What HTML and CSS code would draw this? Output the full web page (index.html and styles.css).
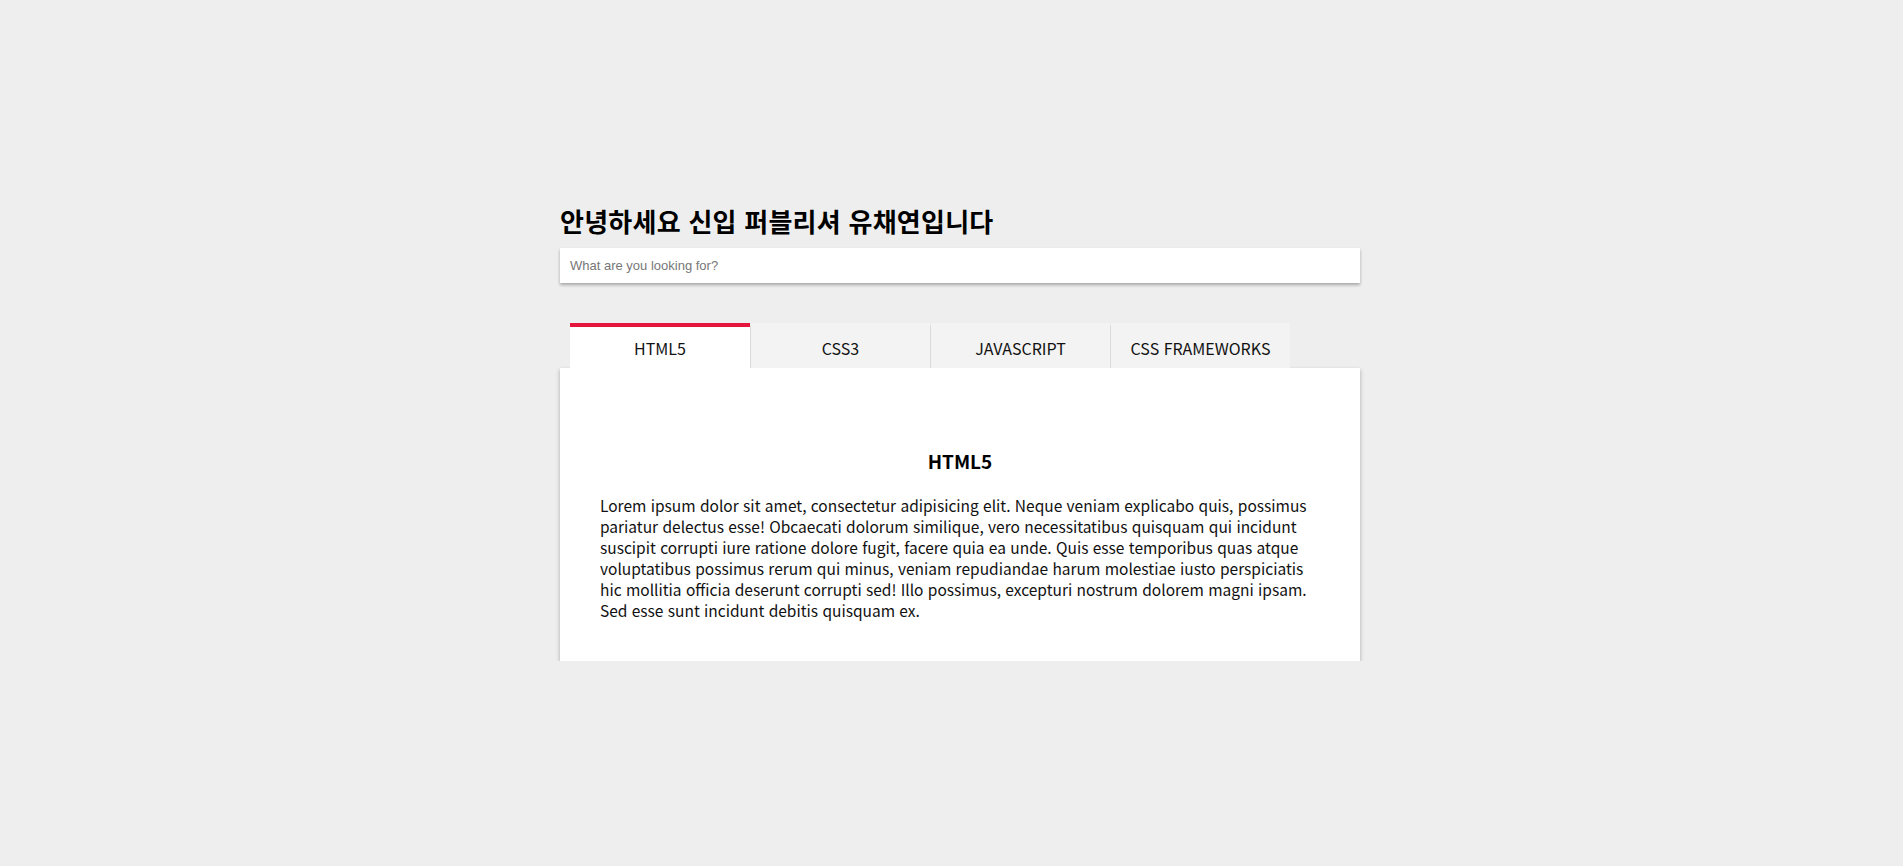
FILE: index.html
```html
<!DOCTYPE html>
<html lang="ko">
<head>
<meta charset="utf-8">
<title>Tabs</title>
<link rel="stylesheet" href="styles.css">
</head>
<body>
<div class="page">
  <h1 class="title">안녕하세요 신입 퍼블리셔 유채연입니다</h1>
  <div class="search">
    <input class="search-input" type="text" placeholder="What are you looking for?">
  </div>
  <div class="tabs">
    <div class="tab active">HTML5</div>
    <div class="tab">CSS3</div>
    <div class="tab">JAVASCRIPT</div>
    <div class="tab">CSS FRAMEWORKS</div>
  </div>
  <div class="panel">
    <h2 class="panel-title">HTML5</h2>
    <p class="panel-text">Lorem ipsum dolor sit amet, consectetur adipisicing elit. Neque veniam explicabo quis, possimus pariatur delectus esse! Obcaecati dolorum similique, vero necessitatibus quisquam qui incidunt suscipit corrupti iure ratione dolore fugit, facere quia ea unde. Quis esse temporibus quas atque voluptatibus possimus rerum qui minus, veniam repudiandae harum molestiae iusto perspiciatis hic mollitia officia deserunt corrupti sed! Illo possimus, excepturi nostrum dolorem magni ipsam. Sed esse sunt incidunt debitis quisquam ex.</p>
  </div>
</div>
</body>
</html>
```
FILE: styles.css
```css
html, body {
  margin: 0;
  padding: 0;
  background: #eeeeee;
  font-family: "Noto Sans CJK KR", "Noto Sans", sans-serif;
  color: #111;
}
.page {
  width: 800px;
  margin: 0 auto;
  padding: 204px 0 0 17px;
}
.title {
  margin: 0;
  font-size: 26px;
  line-height: 34px;
  font-weight: 700;
  letter-spacing: 0.25px;
  color: #000;
}
.search {
  margin-top: 10px;
  background: #fff;
  box-shadow: 0 2px 3px rgba(0, 0, 0, 0.3);
  height: 35px;
  display: flex;
  align-items: center;
}
.search-input {
  border: 0;
  outline: 0;
  background: transparent;
  width: 100%;
  padding: 0 10px;
  font-family: "Liberation Sans", Arial, sans-serif;
  font-size: 13px;
  color: #333;
}
.search-input::placeholder {
  color: #777;
}
.tabs {
  display: flex;
  margin: 40px 0 0 10px;
}
.tab {
  width: 180px;
  height: 41px;
  box-sizing: content-box;
  border-top: 4px solid transparent;
  background: #f3f3f3;
  display: flex;
  align-items: center;
  justify-content: center;
  font-size: 16px;
  font-weight: 400;
  color: #111;
}
.tab + .tab {
  border-left: 1px solid #dadada;
  width: 179px;
}
.tab.active {
  background: #fff;
  border-top-color: #e5163e;
}
.panel {
  background: #fff;
  box-shadow: 0 2px 4px rgba(0, 0, 0, 0.3);
  padding: 40px;
}
.panel-title {
  margin: 41px 0 22px;
  font-size: 19px;
  line-height: 24px;
  text-align: center;
  font-weight: 700;
  color: #000;
}
.panel-text {
  margin: 0;
  font-size: 15.5px;
  line-height: 21px;
  color: #111;
}
```
